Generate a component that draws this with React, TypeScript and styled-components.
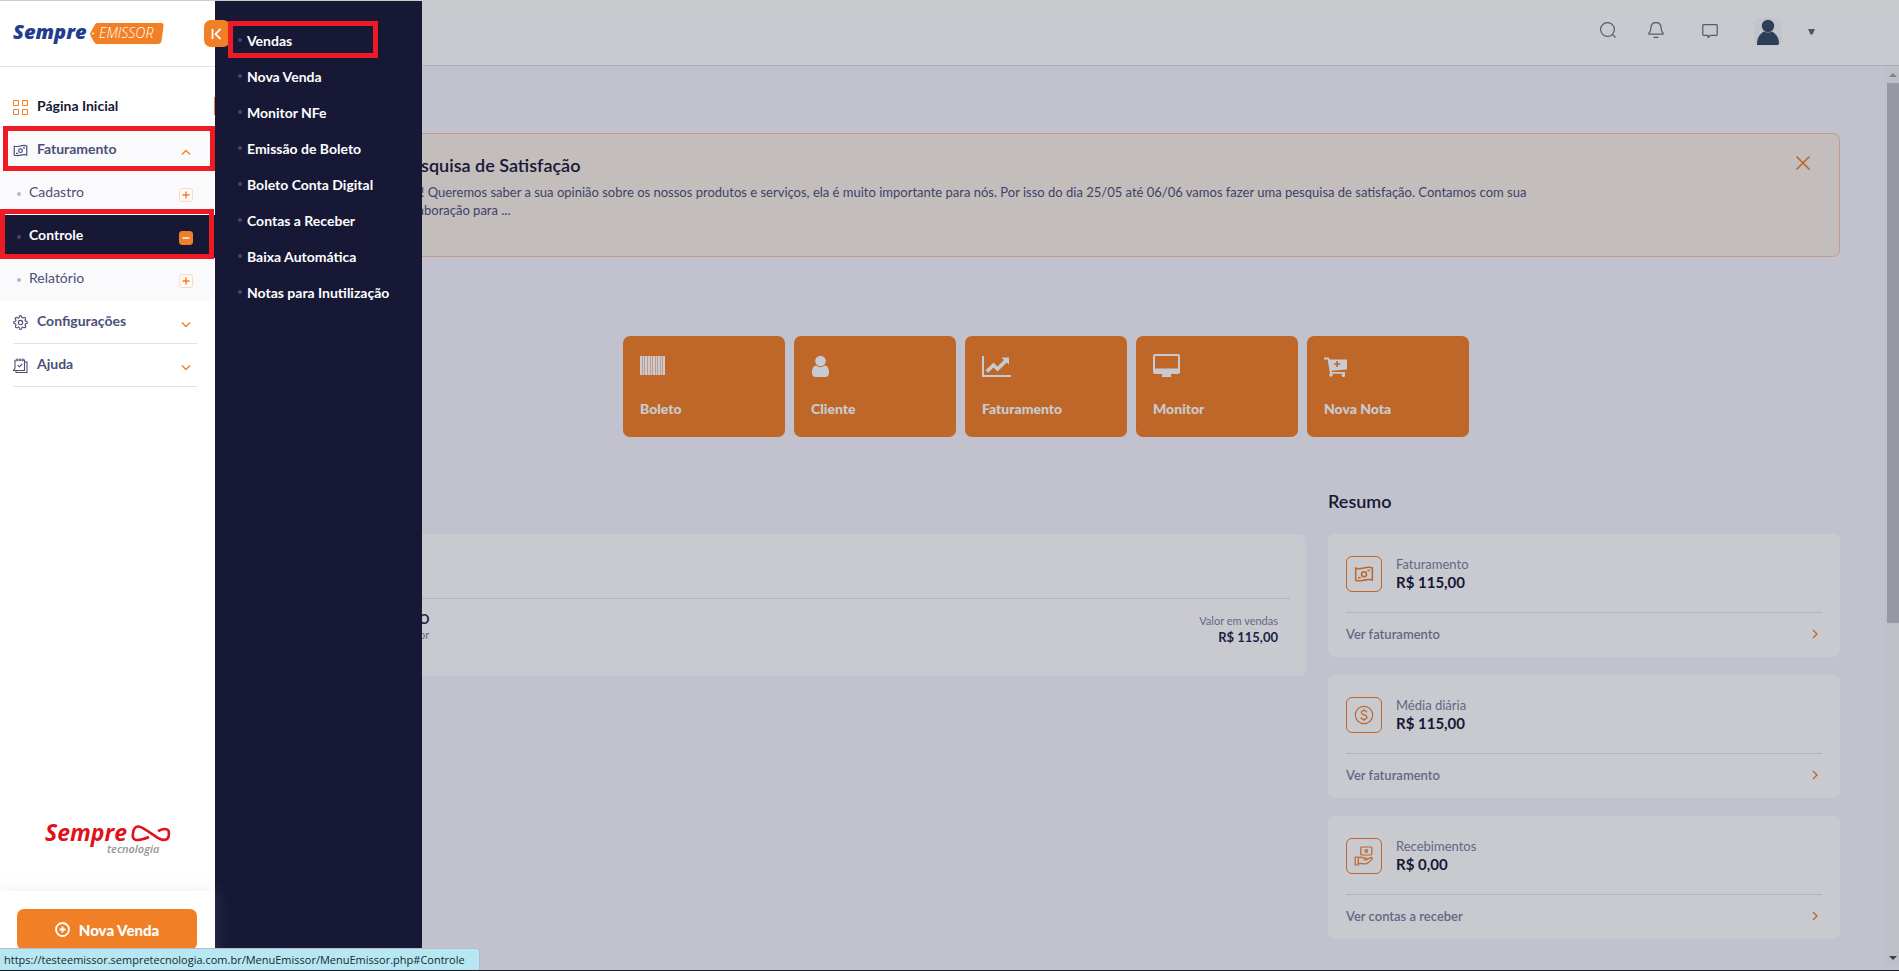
import React from "react";
import styled, { createGlobalStyle, css } from "styled-components";

const c = {
  orange: "#f17f26",
  navy: "#161836",
  slate: "#4b4f78",
  muted: "#7b7e9c",
  line: "#e2e2ea",
  red: "#ed1c24",
  tint: "#fafafd",
};

const GlobalStyle = createGlobalStyle`
  *, *::before, *::after { box-sizing: border-box; }
  html, body, #root { height: 100%; }
  body { margin: 0; font-family: Lato, "Liberation Sans", sans-serif; font-size: 14px; color: ${c.navy}; }
  button { font: inherit; border: 0; padding: 0; background: none; color: inherit; cursor: pointer; }
  a { color: inherit; text-decoration: none; }
  h1, h2, p, ul { margin: 0; padding: 0; }
  ul { list-style: none; }
  i { font-style: normal; }
  svg { display: block; flex: none; }
`;

const Page = styled.div`
  position: relative;
  display: flex;
  height: 100vh;
  overflow: hidden;
  border-top: 1px solid #cacdc9;
  border-bottom: 1px solid #1c1c28;
  background: #f5f5fb;
`;

/* Sidebar */
const Sidebar = styled.aside`
  position: relative;
  z-index: 4;
  flex: 0 0 215px;
  display: flex;
  flex-direction: column;
  background: #fff;
`;
const Brand = styled.div`
  flex: 0 0 66px;
  padding: 17px 0 0 12px;
  border-bottom: 1px solid ${c.line};
`;
const Collapse = styled.button`
  position: absolute;
  z-index: 5;
  top: 19px;
  left: 204px;
  width: 26px;
  height: 27px;
  border-radius: 7px;
  background: ${c.orange};
  display: grid;
  place-items: center;
`;
const Nav = styled.nav`
  padding-top: 19px;
  flex: 1;
`;
const NavItem = styled.li<{ $tint?: boolean; $ruled?: boolean }>`
  position: relative;
  height: 43px;
  padding: 0 18px 0 13px;
  background: ${(p) => (p.$tint ? c.tint : "transparent")};
  ${(p) =>
    p.$ruled &&
    css`
      &::after {
        content: "";
        display: block;
        height: 1px;
        margin-top: -1px;
        background: ${c.line};
      }
    `}
`;
const NavLink = styled.a<{ $current?: boolean }>`
  display: flex;
  align-items: center;
  height: 100%;
  gap: 9px;
  padding-right: 6px;
  font-weight: 700;
  font-size: 14px;
  color: ${(p) => (p.$current ? c.navy : c.slate)};
  span { flex: 1; padding-bottom: 4px; }
`;
const NavIcon = styled.i<{ $accent?: boolean }>`
  color: ${(p) => (p.$accent ? c.orange : "inherit")};
`;
const NavArrow = styled.i`
  margin-top: 3px;
  color: ${c.orange};
`;
const CurrentMark = styled.i`
  position: absolute;
  right: 0;
  top: 11px;
  width: 1px;
  height: 18px;
  background: ${c.orange};
`;
const SubItem = styled.li<{ $active?: boolean }>`
  position: relative;
  height: 43px;
  padding: 0 22px 0 17px;
  background: ${(p) => (p.$active ? c.navy : c.tint)};
  color: ${(p) => (p.$active ? "#fff" : c.slate)};
  font-weight: ${(p) => (p.$active ? 700 : 400)};
  a { display: flex; align-items: center; height: 100%; }
  span { flex: 1; padding: 0 0 4px 8px; }
`;
const Bullet = styled.i<{ $dark?: boolean }>`
  width: 4px;
  height: 4px;
  border-radius: 2px;
  background: ${(p) => (p.$dark ? "#454763" : "#b4b6cb")};
`;
const Toggle = styled.i<{ $open?: boolean }>`
  display: grid;
  place-items: center;
  width: 14px;
  height: 14px;
  margin-top: 2px;
  border-radius: 3px;
  border: 1px solid ${(p) => (p.$open ? c.orange : "#fbdcc2")};
  background: ${(p) => (p.$open ? c.orange : "#fffaf6")};
  color: ${(p) => (p.$open ? "#fff" : c.orange)};
`;
const Mark = styled.div<{ $inset: string }>`
  position: absolute;
  z-index: 6;
  inset: ${(p) => p.$inset};
  border: 5px solid ${c.red};
  pointer-events: none;
`;
const Partner = styled.div`
  display: flex;
  justify-content: center;
  padding-bottom: 32px;
`;
const SidebarFooter = styled.div`
  flex: 0 0 79px;
  padding: 18px 18px 0 17px;
  background: #fff;
  box-shadow: 0 0 16px rgba(170, 170, 210, 0.2);
`;
const NewSale = styled.button`
  display: flex;
  align-items: center;
  justify-content: center;
  gap: 9px;
  width: 100%;
  height: 41px;
  border-radius: 7px;
  background: ${c.orange};
  color: #fff;
  font-size: 15px;
  font-weight: 900;
  line-height: 18px;
`;

/* Flyout */
const Flyout = styled.nav`
  position: absolute;
  z-index: 3;
  top: 0;
  bottom: 0;
  left: 215px;
  width: 207px;
  padding-top: 21px;
  background: ${c.navy};
`;
const FlyoutItem = styled.li`
  height: 36px;
  padding-left: 23px;
  color: #fff;
  font-weight: 700;
  a { display: flex; align-items: center; gap: 5px; height: 100%; }
`;
const FlyoutMark = styled.div`
  position: absolute;
  z-index: 6;
  top: 20px;
  left: 228px;
  width: 150px;
  height: 37px;
  border: 5px solid ${c.red};
  pointer-events: none;
`;

/* Main */
const Main = styled.div`
  position: relative;
  flex: 1;
  min-width: 0;
  display: flex;
  flex-direction: column;
`;
const Scrim = styled.div`
  position: absolute;
  z-index: 2;
  inset: 0;
  background: rgba(22, 24, 54, 0.23);
  pointer-events: none;
`;
const Header = styled.header`
  flex: 0 0 65px;
  display: flex;
  align-items: flex-start;
  justify-content: flex-end;
  gap: 30px;
  padding: 17px 84px 0 0;
  background: #fff;
  border-bottom: 1px solid #dadae0;
`;
const HeaderButton = styled.button<{ $w: number }>`
  display: grid;
  place-items: center;
  width: ${(p) => p.$w}px;
  height: 24px;
  color: #6c6c7c;
`;
const UserButton = styled.button`
  display: flex;
  align-items: center;
  gap: 26px;
`;
const Avatar = styled.i`
  width: 28px;
  height: 28px;
  border-radius: 6px;
  overflow: hidden;
  background: #f7f7f8;
`;
const Body = styled.div`
  flex: 1;
  min-height: 0;
  display: flex;
`;
const Content = styled.main`
  flex: 1;
  min-width: 0;
  padding: 67px 45px 0 37px;
`;
const Scrollbar = styled.div`
  flex: 0 0 14px;
  display: flex;
  flex-direction: column;
  align-items: flex-end;
  margin-bottom: 4px;
  padding-left: 2px;
  background: #f1f1f4;
`;
const ScrollArrow = styled.i`
  flex: 0 0 17px;
  width: 12px;
  display: grid;
  place-items: center;
`;
const ScrollThumb = styled.i`
  width: 12px;
  height: 60%;
  background: #bebec2;
`;
const ScrollSpace = styled.i`
  flex: 1;
`;
const Notice = styled.section`
  display: flex;
  height: 124px;
  padding: 19px 28px 0 148px;
  border: 1px solid #f6c4a4;
  border-radius: 7px;
  background: #f8eee6;
`;
const NoticeText = styled.div`
  flex: 1;
  h1 { font-size: 18px; line-height: 24px; font-weight: 600; }
  p { max-width: 1140px; margin-top: 6px; font-size: 13px; line-height: 18px; color: ${c.slate}; }
`;
const Close = styled.button`
  width: 16px;
  height: 20px;
  color: ${c.orange};
`;
const Tiles = styled.div`
  display: flex;
  justify-content: center;
  gap: 9px;
  margin-top: 79px;
`;
const Tile = styled.button`
  display: flex;
  flex-direction: column;
  width: 162px;
  height: 101px;
  padding: 18px 17px 0;
  border-radius: 7px;
  background: ${c.orange};
  color: #fff;
  text-align: left;
  font-size: 14px;
  font-weight: 900;
  line-height: 18px;
  svg { margin-bottom: 23px; }
`;
const Columns = styled.div`
  display: flex;
  align-items: flex-start;
  gap: 22px;
  margin-top: 52px;
`;
const Card = styled.section`
  border-radius: 7px;
  background: #fff;
`;
const SalesColumn = styled.div`
  flex: 1;
  min-width: 0;
  padding-top: 45px;
`;
const SalesCard = styled(Card)`
  height: 142px;
  padding: 64px 16px 0;
`;
const SalesRow = styled.div`
  display: flex;
  justify-content: space-between;
  padding: 13px 12px 0 151px;
  border-top: 1px solid ${c.line};
`;
const SalesCell = styled.div<{ $right?: boolean }>`
  display: flex;
  flex-direction: column;
  text-align: ${(p) => (p.$right ? "right" : "left")};
  line-height: ${(p) => (p.$right ? 17 : 15)}px;
  color: ${c.muted};
  font-size: 11px;
  strong { font-size: 13px; color: #24264a; }
`;
const Summary = styled.div`
  flex: 0 0 512px;
  display: flex;
  flex-direction: column;
  gap: 18px;
  h2 { font-size: 18px; line-height: 24px; margin-bottom: 3px; font-weight: 600; }
`;
const SummaryCard = styled(Card)`
  height: 123px;
  padding: 22px 18px 0;
`;
const SummaryHead = styled.div`
  display: flex;
  gap: 14px;
  height: 56px;
`;
const IconBox = styled.i`
  display: grid;
  place-items: center;
  width: 36px;
  height: 36px;
  border: 1px solid ${c.orange};
  border-radius: 6px;
  color: ${c.orange};
`;
const Figure = styled.div`
  display: flex;
  flex-direction: column;
  margin-top: -1px;
  line-height: 18px;
  font-size: 13px;
  color: ${c.muted};
  strong { font-size: 15px; color: ${c.navy}; }
`;
const SummaryLink = styled.a`
  display: flex;
  align-items: center;
  justify-content: space-between;
  height: 43px;
  padding-right: 2px;
  border-top: 1px solid ${c.line};
  font-size: 13px;
  font-weight: 600;
  color: ${c.muted};
  svg { color: ${c.orange}; }
`;
const StatusUrl = styled.div`
  position: absolute;
  z-index: 7;
  left: 0;
  bottom: 0;
  height: 22px;
  padding: 0 14px 0 4px;
  border: solid #b9b9c4;
  border-width: 1px 1px 0 0;
  border-top-right-radius: 4px;
  background: #b5e8f3;
  color: #23262e;
  font: 11px/21px "Open Sans", "Noto Sans", sans-serif;
`;

/* Icons */
const stroke = { fill: "none", stroke: "currentColor" } as const;

const Chevron = ({ dir }: { dir: "up" | "down" | "right" }) => {
  const d = { up: "M1 7.500 5 3.500l4 4", down: "M1 3.500l4 4 4-4", right: "M3 1l4 4-4 4" }[dir];
  return (
    <svg width="10" height="10" viewBox="0 0 10 10" {...stroke} strokeWidth="1.4"><path d={d} /></svg>
  );
};
const Money = ({ size = 16 }: { size?: number }) => (
  <svg width={size} height={size} viewBox="0 0 18 18" {...stroke} strokeWidth="1.4">
    <path d="M1.500 3.800c2.500 1 5 .3 7.500-.3s5-1 7.500 0v11c-2.500-1-5-.4-7.500.1s-5 1-7.500 0z" />
    <circle cx="9" cy="9.200" r="2.200" />
    <path d="M12 5.900h2.400M3.600 12.400H6" />
  </svg>
);
const Grid = () => (
  <svg width="15" height="15" viewBox="0 0 15 15" {...stroke} strokeWidth="1">
    <path d="M.5.5h5v5h-5zM9.500.5h5v5h-5zM.5 9.500h5v5h-5zM9.500 9.500h5v5h-5z" />
  </svg>
);
const Gear = () => (
  <svg width="15" height="15" viewBox="0 0 24 24" {...stroke} strokeWidth="1.800">
    <circle cx="12" cy="12" r="3.500" />
    <path d="M19.400 15a1.650 1.650 0 0 0 .33 1.820l.06.06a2 2 0 1 1-2.830 2.830l-.06-.06a1.650 1.650 0 0 0-2.800 1.170V21a2 2 0 0 1-4 0v-.09A1.650 1.650 0 0 0 7.240 19.700l-.06.06a2 2 0 1 1-2.830-2.830l.06-.06a1.650 1.650 0 0 0-1.170-2.800H3a2 2 0 0 1 0-4h.09A1.650 1.650 0 0 0 4.300 7.240l-.06-.06a2 2 0 1 1 2.830-2.830l.06.06a1.650 1.650 0 0 0 2.800-1.170V3a2 2 0 0 1 4 0v.09a1.650 1.650 0 0 0 2.800 1.170l.06-.06a2 2 0 1 1 2.830 2.830l-.06.06a1.650 1.650 0 0 0 1.170 2.800H21a2 2 0 0 1 0 4h-.09A1.650 1.650 0 0 0 19.400 15z" />
  </svg>
);
const Help = () => (
  <svg width="15" height="15" viewBox="0 0 15 15" {...stroke} strokeWidth="1.100">
    <path d="M2.500 2h9v10.500h-11L2 10V2M12 4h2v10.500H3v-2M4 .5v2.800M7 .5v2.800M10 .5v2.800M4.800 7.200l1.600 1.600 2.800-2.800" />
  </svg>
);
const Coin = () => (
  <svg width="20" height="20" viewBox="0 0 20 20" {...stroke} strokeWidth="1.200">
    <circle cx="10" cy="10" r="8.700" />
    <path d="M12.800 7.400c-.3-1.200-1.300-1.800-2.800-1.800s-2.700.7-2.700 2c0 3 5.600 1.600 5.600 4.700 0 1.400-1.200 2.100-2.900 2.100s-2.800-.7-3-2M10 3.900v1.700M10 14.400v1.700" />
  </svg>
);
const Hand = () => (
  <svg width="20" height="20" viewBox="0 0 20 20" {...stroke} strokeWidth="1.200">
    <rect x="6.800" y="1" width="11" height="8" rx="1" />
    <circle cx="12.300" cy="5" r="1.300" />
    <path d="M1.200 11h3v8h-3zM4.200 12c2-1.400 3.500-1 5 .2h2.600c1.300 0 1.300 1.800 0 1.800H9.500M12.500 13.800l4-2.200c1.500-.6 2.300.6 1.300 1.600-1.700 1.800-3.200 4-5.500 4.500-2.800.5-5.500 0-8.100-.4" />
  </svg>
);
const Barcode = () => (
  <svg width="25" height="23" viewBox="0 0 25 23" fill="currentColor">
    <path opacity=".55" d="M0 2h25v19H0z" />
    <path d="M0 2h2v19H0zM3 2h1v19H3zM5 2h2v19H5zM8 2h2v19H8zM11 2h1v19h-1zM13 2h2v19h-2zM16 2h1v19h-1zM18 2h2v19h-2zM21 2h1v19h-1zM23 2h2v19h-2z" />
  </svg>
);
const Client = () => (
  <svg width="19" height="23" viewBox="0 0 19 23" fill="currentColor">
    <circle cx="9.500" cy="7" r="5.300" />
    <path d="M5.200 11.500C2 11.800 1 15 1 18.500 1 21.500 2.500 23 4.500 23h10c2 0 3.500-1.500 3.500-4.500 0-3.500-1-6.700-4.200-7-2.600 2.200-6 2.200-8.600 0z" />
  </svg>
);
const ChartLine = () => (
  <svg width="29" height="23" viewBox="0 0 29 23" fill="currentColor">
    <path d="M0 2h2v19h27v2H0zM19.500 3.500H27v7.300l-2.300-2.300-9.200 9-4-4-5.300 5.300-2.500-2.600L11.500 8.500l4 4L22 6z" />
  </svg>
);
const Monitor = () => (
  <svg width="27" height="23" viewBox="0 0 27 23" fill="currentColor">
    <path fillRule="evenodd" d="M2 0h23a2 2 0 0 1 2 2v16a2 2 0 0 1-2 2h-7.500l.8 1.500v1.500H9v-1.500l.6-1.500H2a2 2 0 0 1-2-2V2a2 2 0 0 1 2-2zm0 2v12.500h23V2z" />
  </svg>
);
const Cart = () => (
  <svg width="24" height="23" viewBox="0 0 24 23" fill="currentColor">
    <path fillRule="evenodd" d="M0 3.500h5l.6 2H23v10L7.500 16.800l.2 1.200H21v4a1.700 1.700 0 1 1-2-2.300H8.200A1.700 1.700 0 1 1 6 19.500L3.600 5.500H0zM12.300 7v2.200h-2.200v1.600h2.200V13h1.600v-2.200h2.200V9.200h-2.200V7z" />
  </svg>
);

const EmissorLogo = () => (
  <svg width="156" height="32" viewBox="0 0 156 32" role="img" aria-label="Sempre Emissor">
    <text x="1" y="21" fontFamily="Open Sans, sans-serif" fontSize="20" fontWeight="800" fontStyle="italic" fill="#223d8f">Sempre</text>
    <path d="M85 5h64q3 0 2.500 3l-2 15q-.5 3-4 3H85q-2 0-3-2l-3.500-6.500q-1-2 .3-3.500L83 6.500Q84 5 85 5z" fill={c.orange} />
    <circle cx="81" cy="15.500" r="1" fill="#fff" />
    <text x="87" y="20" fontFamily="Open Sans, sans-serif" fontSize="14" fontWeight="300" fontStyle="italic" fill="#fff">EMISSOR</text>
  </svg>
);
const TecnologiaLogo = () => (
  <svg width="128" height="44" viewBox="0 0 128 44" role="img" aria-label="Sempre tecnologia">
    <text x="1" y="26" fontFamily="Open Sans, sans-serif" fontSize="23" fontWeight="700" fontStyle="italic" fill="#e0111b">Sempre</text>
    <path d="M105 22c-5 2-9 3.500-13 3-3.500-.5-3.500-4-3-7 .7-4.500 2.500-7 6-6.500 4 .6 14 8.500 20 12 4.500 2.300 9 2 9.700-2.500.6-4.500.3-6.500-3.200-7-3-.2-5 .8-7.500 2.200" fill="none" stroke="#e0111b" strokeWidth="2.600" />
    <text x="63" y="38" fontFamily="Open Sans, sans-serif" fontSize="11" fontWeight="600" fontStyle="italic" fill="#949494">tecnologia</text>
  </svg>
);

const submenu = ["Vendas", "Nova Venda", "Monitor NFe", "Emissão de Boleto", "Boleto Conta Digital", "Contas a Receber", "Baixa Automática", "Notas para Inutilização"];
const tiles = [
  { label: "Boleto", icon: <Barcode /> },
  { label: "Cliente", icon: <Client /> },
  { label: "Faturamento", icon: <ChartLine /> },
  { label: "Monitor", icon: <Monitor /> },
  { label: "Nova Nota", icon: <Cart /> },
];
const summary = [
  { label: "Faturamento", value: "R$ 115,00", link: "Ver faturamento", icon: <Money size={20} /> },
  { label: "Média diária", value: "R$ 115,00", link: "Ver faturamento", icon: <Coin /> },
  { label: "Recebimentos", value: "R$ 0,00", link: "Ver contas a receber", icon: <Hand /> },
];

const SubEntry = ({ label, active }: { label: string; active?: boolean }) => (
  <SubItem $active={active}>
    <a href={`#${label}`}>
      <Bullet $dark={active} />
      <span>{label}</span>
      <Toggle $open={active}>
        <svg width="8" height="8" viewBox="0 0 8 8" {...stroke} strokeWidth="1.400">
          <path d={active ? "M.5 4h7" : "M.5 4h7M4 .5v7"} />
        </svg>
      </Toggle>
    </a>
    {active && <Mark $inset="-6px 1px -1px 0" />}
  </SubItem>
);

export default function App() {
  return (
    <Page>
      <GlobalStyle />
      <Sidebar>
        <Brand><EmissorLogo /></Brand>
        <Collapse aria-label="Recolher menu">
          <svg width="12" height="12" viewBox="0 0 12 12" fill="none" stroke="#fff" strokeWidth="1.800">
            <path d="M1.500 1v10M9.500 1 4.500 6l5 5" />
          </svg>
        </Collapse>
        <Nav>
          <ul>
            <NavItem>
              <NavLink href="#inicio" $current>
                <NavIcon $accent><Grid /></NavIcon>
                <span>Página Inicial</span>
              </NavLink>
              <CurrentMark />
            </NavItem>
            <NavItem $tint>
              <NavLink href="#Faturamento">
                <NavIcon><Money size={15} /></NavIcon>
                <span>Faturamento</span>
                <NavArrow><Chevron dir="up" /></NavArrow>
              </NavLink>
              <Mark $inset="-3px 0 1px 3px" />
            </NavItem>
            <SubEntry label="Cadastro" />
            <SubEntry label="Controle" active />
            <SubEntry label="Relatório" />
            <NavItem $ruled>
              <NavLink href="#Configuracoes">
                <NavIcon><Gear /></NavIcon>
                <span>Configurações</span>
                <NavArrow><Chevron dir="down" /></NavArrow>
              </NavLink>
            </NavItem>
            <NavItem $ruled>
              <NavLink href="#Ajuda">
                <NavIcon><Help /></NavIcon>
                <span>Ajuda</span>
                <NavArrow><Chevron dir="down" /></NavArrow>
              </NavLink>
            </NavItem>
          </ul>
        </Nav>
        <Partner><TecnologiaLogo /></Partner>
        <SidebarFooter>
          <NewSale>
            <svg width="15" height="15" viewBox="0 0 15 15" fill="none" stroke="#fff" strokeWidth="1.800">
              <circle cx="7.500" cy="7.500" r="6.500" />
              <path d="M4.500 7.500h6M7.500 4.500v6" />
            </svg>
            Nova Venda
          </NewSale>
        </SidebarFooter>
      </Sidebar>

      <Flyout aria-label="Controle">
        <ul>
          {submenu.map((label) => (
            <FlyoutItem key={label}>
              <a href={`#${label}`}><Bullet $dark />{label}</a>
            </FlyoutItem>
          ))}
        </ul>
      </Flyout>
      <FlyoutMark />

      <Main>
        <Header>
          <HeaderButton $w={16} aria-label="Buscar">
            <svg width="16" height="16" viewBox="0 0 16 16" {...stroke} strokeWidth="1.200">
              <circle cx="7.500" cy="7.500" r="6.900" /><path d="M12.300 12.300 15.500 15.500" />
            </svg>
          </HeaderButton>
          <HeaderButton $w={20} aria-label="Notificações">
            <svg width="16" height="16" viewBox="0 0 16 16" {...stroke} strokeWidth="1.200">
              <path d="M1.500 12.200c-.8 0-1-.8-.4-1.400C2.300 9.600 2.800 8.500 2.900 6 3 2.800 5 .7 8 .7S13 2.800 13.100 6c.1 2.500.6 3.600 1.800 4.800.6.6.4 1.400-.4 1.400zM5.600 15.300h4.800" />
            </svg>
          </HeaderButton>
          <HeaderButton $w={28} aria-label="Mensagens">
            <svg width="16" height="16" viewBox="0 0 16 16" {...stroke} strokeWidth="1.200">
              <path d="M1.600 2.700h12.800c.5 0 .8.300.8.800v9c0 .5-.3.800-.8.800H8.500L6 15.800v-2.500H1.600c-.5 0-.8-.3-.8-.8v-9c0-.5.3-.8.8-.8z" />
            </svg>
          </HeaderButton>
          <UserButton aria-label="Conta">
            <Avatar>
              <svg width="28" height="28" viewBox="0 0 28 28" fill="#334965">
                <circle cx="14" cy="8" r="6.200" />
                <path d="M3 27c0-7 2.500-11 7-13.500 2.500 1.300 5.500 1.300 8 0C22.500 16 25 20 25 25c0 1.500-.5 2-2 2z" />
              </svg>
            </Avatar>
            <svg width="7" height="6" viewBox="0 0 7 6" fill="#666675"><path d="M0 0h7L4.500 5.500h-2z" /></svg>
          </UserButton>
        </Header>
        <Body>
          <Content>
            <Notice>
              <NoticeText>
                <h1>Pesquisa de Satisfação</h1>
                <p>Olá! Queremos saber a sua opinião sobre os nossos produtos e serviços, ela é muito importante para nós. Por isso do dia 25/05 até 06/06 vamos fazer uma pesquisa de satisfação. Contamos com sua colaboração para ...</p>
              </NoticeText>
              <Close aria-label="Fechar">
                <svg width="16" height="16" viewBox="0 0 16 16" {...stroke} strokeWidth="1.600"><path d="M1.500 1.500l13 13M14.500 1.500l-13 13" /></svg>
              </Close>
            </Notice>
            <Tiles>
              {tiles.map((t) => (
                <Tile key={t.label}>{t.icon}{t.label}</Tile>
              ))}
            </Tiles>
            <Columns>
              <SalesColumn>
                <SalesCard>
                  <SalesRow>
                    <SalesCell><strong>O</strong>or</SalesCell>
                    <SalesCell $right>Valor em vendas<strong>R$ 115,00</strong></SalesCell>
                  </SalesRow>
                </SalesCard>
              </SalesColumn>
              <Summary>
                <h2>Resumo</h2>
                {summary.map((s) => (
                  <SummaryCard key={s.label}>
                    <SummaryHead>
                      <IconBox>{s.icon}</IconBox>
                      <Figure>{s.label}<strong>{s.value}</strong></Figure>
                    </SummaryHead>
                    <SummaryLink href="#resumo">{s.link}<Chevron dir="right" /></SummaryLink>
                  </SummaryCard>
                ))}
              </Summary>
            </Columns>
          </Content>
          <Scrollbar>
            <ScrollArrow><svg width="8" height="4" viewBox="0 0 8 4" fill="#a2a2a6"><path d="M4 0l4 4H0z" /></svg></ScrollArrow>
            <ScrollThumb />
            <ScrollSpace />
            <ScrollArrow><svg width="8" height="4" viewBox="0 0 8 4" fill="#4a4a50"><path d="M0 0h8L4 4z" /></svg></ScrollArrow>
          </Scrollbar>
        </Body>
        <Scrim />
      </Main>
      <StatusUrl>https://testeemissor.sempretecnologia.com.br/MenuEmissor/MenuEmissor.php#Controle</StatusUrl>
    </Page>
  );
}
